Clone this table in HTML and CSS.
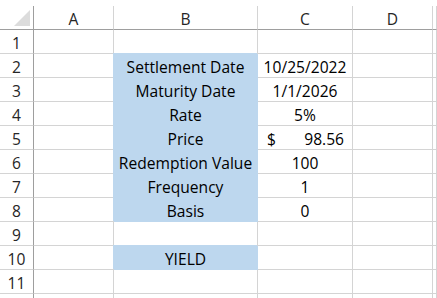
FILE: index.html
```html
<!DOCTYPE html>
<html>
<head>
<meta charset="utf-8">
<link rel="stylesheet" href="styles.css">
</head>
<body>
<div class="sheet">
  <div class="hdr corner"><svg class="corner-mark" width="16" height="16" viewBox="0 0 16 16"><polygon points="16,0 16,16 0,16" fill="#dcdcdc"/></svg></div>
  <div class="hdr col">A</div>
  <div class="hdr col">B</div>
  <div class="hdr col">C</div>
  <div class="hdr col">D</div>
  <div class="hdr col"></div>

  <div class="hdr row">1</div><div class="cell"></div><div class="cell"></div><div class="cell"></div><div class="cell"></div><div class="cell"></div>
  <div class="hdr row">2</div><div class="cell"></div><div class="cell label">Settlement Date</div><div class="cell val">10/25/2022</div><div class="cell"></div><div class="cell"></div>
  <div class="hdr row">3</div><div class="cell"></div><div class="cell label">Maturity Date</div><div class="cell val">1/1/2026</div><div class="cell"></div><div class="cell"></div>
  <div class="hdr row">4</div><div class="cell"></div><div class="cell label">Rate</div><div class="cell val">5%</div><div class="cell"></div><div class="cell"></div>
  <div class="hdr row">5</div><div class="cell"></div><div class="cell label">Price</div><div class="cell acct"><span>$</span><span>98.56</span></div><div class="cell"></div><div class="cell"></div>
  <div class="hdr row">6</div><div class="cell"></div><div class="cell label">Redemption Value</div><div class="cell val">100</div><div class="cell"></div><div class="cell"></div>
  <div class="hdr row">7</div><div class="cell"></div><div class="cell label">Frequency</div><div class="cell val">1</div><div class="cell"></div><div class="cell"></div>
  <div class="hdr row">8</div><div class="cell"></div><div class="cell label">Basis</div><div class="cell val">0</div><div class="cell"></div><div class="cell"></div>
  <div class="hdr row">9</div><div class="cell"></div><div class="cell"></div><div class="cell"></div><div class="cell"></div><div class="cell"></div>
  <div class="hdr row">10</div><div class="cell"></div><div class="cell label">YIELD</div><div class="cell"></div><div class="cell"></div><div class="cell"></div>
  <div class="hdr row">11</div><div class="cell"></div><div class="cell"></div><div class="cell"></div><div class="cell"></div><div class="cell"></div>
  <div class="hdr row"></div><div class="cell"></div><div class="cell"></div><div class="cell"></div><div class="cell"></div><div class="cell"></div>
</div>
</body>
</html>
```
FILE: styles.css
```css
html, body {
  margin: 0;
  padding: 0;
  background: #ffffff;
  overflow: hidden;
}

.sheet {
  display: grid;
  grid-template-columns: 34px 80px 144px 95px 80px 1fr;
  grid-template-rows: 24px repeat(12, 24px);
  margin-top: 6px;
  font-family: "Open Sans", "Liberation Sans", sans-serif;
  font-size: 15.6px;
  line-height: 20px;
  color: #000;
  height: 292px;
  overflow: hidden;
}

.sheet > div {
  box-sizing: border-box;
  border-right: 1px solid #d4d4d4;
  border-bottom: 1px solid #d4d4d4;
  display: flex;
  align-items: center;
  justify-content: center;
  padding-top: 3px;
  white-space: nowrap;
  overflow: hidden;
}

.hdr {
  color: #262626;
}

.hdr.col,
.hdr.corner {
  border-bottom-color: #9e9e9e;
}

.hdr.row,
.hdr.corner {
  border-right-color: #9e9e9e;
}

.corner {
  position: relative;
}

.corner-mark {
  position: absolute;
  left: 14px;
  top: 4px;
}

.label {
  background: #bdd7ee;
  border-right-color: #bdd7ee !important;
  border-bottom-color: #bdd7ee !important;
  box-shadow: -1px -1px 0 0 #bdd7ee;
}

.acct {
  justify-content: space-between !important;
  padding: 3px 8px 0 9px;
}
```
